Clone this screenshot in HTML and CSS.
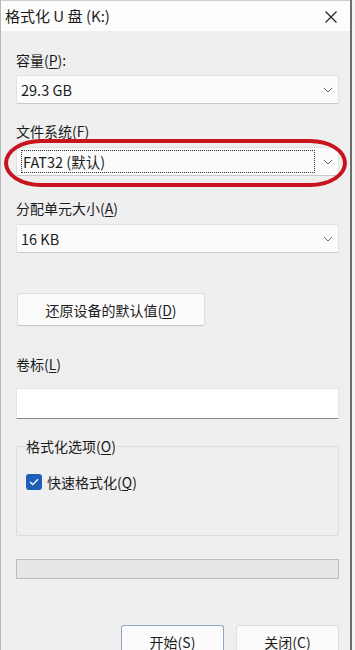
FILE: index.html
```html
<!DOCTYPE html>
<html lang="zh-CN">
<head>
<meta charset="utf-8">
<title>格式化 U 盘 (K:)</title>
<link rel="stylesheet" href="styles.css">
</head>
<body>
<div class="window">
  <div class="titlebar">
    <span class="title">格式化 U 盘 (K:)</span>
    <svg class="close" width="14" height="14" viewBox="0 0 14 14"><path d="M1.5 1.5 L12.5 12.5 M12.5 1.5 L1.5 12.5" stroke="#222" stroke-width="1.2" fill="none"/></svg>
  </div>
  <div class="content">
    <div class="label l1">容量(<u>P</u>):</div>
    <div class="combo">
      <span>29.3 GB</span>
      <svg class="chev" width="10" height="6" viewBox="0 0 10 6"><path d="M1 1 L5 5 L9 1" stroke="#666" stroke-width="1" fill="none"/></svg>
    </div>
    <div class="label l2">文件系统(<u>F</u>)</div>
    <div class="combo focused">
      <span class="focus">FAT32 (默认)</span>
      <svg class="chev" width="10" height="6" viewBox="0 0 10 6"><path d="M1 1 L5 5 L9 1" stroke="#666" stroke-width="1" fill="none"/></svg>
      <div class="ring"></div>
    </div>
    <div class="label l3">分配单元大小(<u>A</u>)</div>
    <div class="combo">
      <span>16 KB</span>
      <svg class="chev" width="10" height="6" viewBox="0 0 10 6"><path d="M1 1 L5 5 L9 1" stroke="#666" stroke-width="1" fill="none"/></svg>
    </div>
    <button class="btn restore">还原设备的默认值(<u>D</u>)</button>
    <div class="label l4">卷标(<u>L</u>)</div>
    <div class="textbox"></div>
    <fieldset class="group">
      <legend>格式化选项(<u>O</u>)</legend>
      <div class="check-row">
        <span class="checkbox"><svg width="10" height="8" viewBox="0 0 10 8"><path d="M1 4 L3.8 6.6 L9 1.2" stroke="#fff" stroke-width="1.3" fill="none"/></svg></span>
        <span>快速格式化(<u>Q</u>)</span>
      </div>
    </fieldset>
    <div class="progress"></div>
    <div class="actions">
      <button class="btn primary">开始(<u>S</u>)</button>
      <button class="btn">关闭(<u>C</u>)</button>
    </div>
  </div>
</div>
</body>
</html>
```
FILE: styles.css
```css
html, body {
  margin: 0;
  padding: 0;
  background: #f3f3f3;
}
body {
  width: 355px;
  height: 650px;
  overflow: hidden;
  font-family: "Noto Sans CJK SC", "Noto Sans", sans-serif;
  color: #1b1b1b;
  font-size: 14px;
}
u {
  text-decoration: underline;
  text-underline-offset: 2px;
  text-decoration-thickness: 1px;
}
.window {
  width: 352px;
  height: 650px;
  background: #efeff0;
  border-left: 1px solid #b8b8b8;
  border-right: 2px solid #6e6e6e;
  box-sizing: border-box;
  position: relative;
}
.titlebar {
  height: 31px;
  background: #fdfdfd;
  border-top: 1px solid #cfcfcf;
  box-sizing: border-box;
  display: flex;
  align-items: center;
  justify-content: space-between;
  padding: 0 12px 0 4px;
}
.title {
  font-size: 15px;
  line-height: 20px;
}
.close {
  margin-top: 2px;
}
.content {
  padding: 0 11px 0 15px;
}
.label {
  line-height: 20px;
  height: 20px;
}
.l1 { margin-top: 19px; margin-bottom: 5px; }
.l2 { margin-top: 17px; margin-bottom: 6px; }
.l3 { margin-top: 22px; margin-bottom: 6px; }
.l4 { margin-top: 28px; margin-bottom: 14px; }
.combo {
  height: 29px;
  box-sizing: border-box;
  background: #fbfbfb;
  border: 1px solid #e2e2e2;
  border-bottom-color: #c9c9c9;
  border-radius: 2px;
  display: flex;
  align-items: center;
  justify-content: space-between;
  padding: 0 5px 0 4px;
  position: relative;
  font-size: 14.5px;
}
.focus {
  flex: 1;
  margin-right: 8px;
  border: 1px dotted #333;
  padding: 1px 1px;
  line-height: 19px;
}
.chev {
  flex: none;
}
.ring {
  position: absolute;
  left: -13px;
  right: -9px;
  top: -9px;
  bottom: -12px;
  border: 4.5px solid #c8141e;
  border-radius: 40px / 26px;
  pointer-events: none;
}
.btn {
  font-family: inherit;
  font-size: 14px;
  color: #1b1b1b;
  background: #fbfbfb;
  border: 1px solid #dedede;
  border-bottom-color: #c6c6c6;
  border-radius: 3px;
  height: 33px;
  padding: 0;
}
.restore {
  display: block;
  width: 188px;
  margin-top: 40px;
  margin-left: 1px;
}
.textbox {
  height: 31px;
  background: #ffffff;
  border: 1px solid #e4e4e4;
  border-bottom: 1px solid #8a8a8a;
  box-sizing: border-box;
}
.group {
  margin: 17px 0 0 0;
  padding: 0 10px 0 9px;
  height: 100px;
  box-sizing: border-box;
  border: 1px solid #dddddd;
  border-radius: 2px;
  min-width: 0;
}
.group legend {
  padding: 0 2px 0 0;
  margin-left: 0;
  line-height: 20px;
}
.check-row {
  display: flex;
  align-items: center;
  gap: 5px;
  margin-top: 16px;
  height: 20px;
}
.checkbox {
  width: 16px;
  height: 16px;
  box-sizing: border-box;
  background: #1d5fb8;
  border-radius: 3px;
  display: flex;
  align-items: center;
  justify-content: center;
}
.progress {
  margin-top: 23px;
  height: 20px;
  box-sizing: border-box;
  background: #e6e6e6;
  border: 1px solid #bcbcbc;
}
.actions {
  display: flex;
  justify-content: flex-end;
  gap: 12px;
  margin-top: 46px;
}
.actions .btn {
  width: 103px;
}
.actions .primary {
  border: 1px solid #8fa7c4;
  border-bottom-color: #5f7fa8;
}
```
